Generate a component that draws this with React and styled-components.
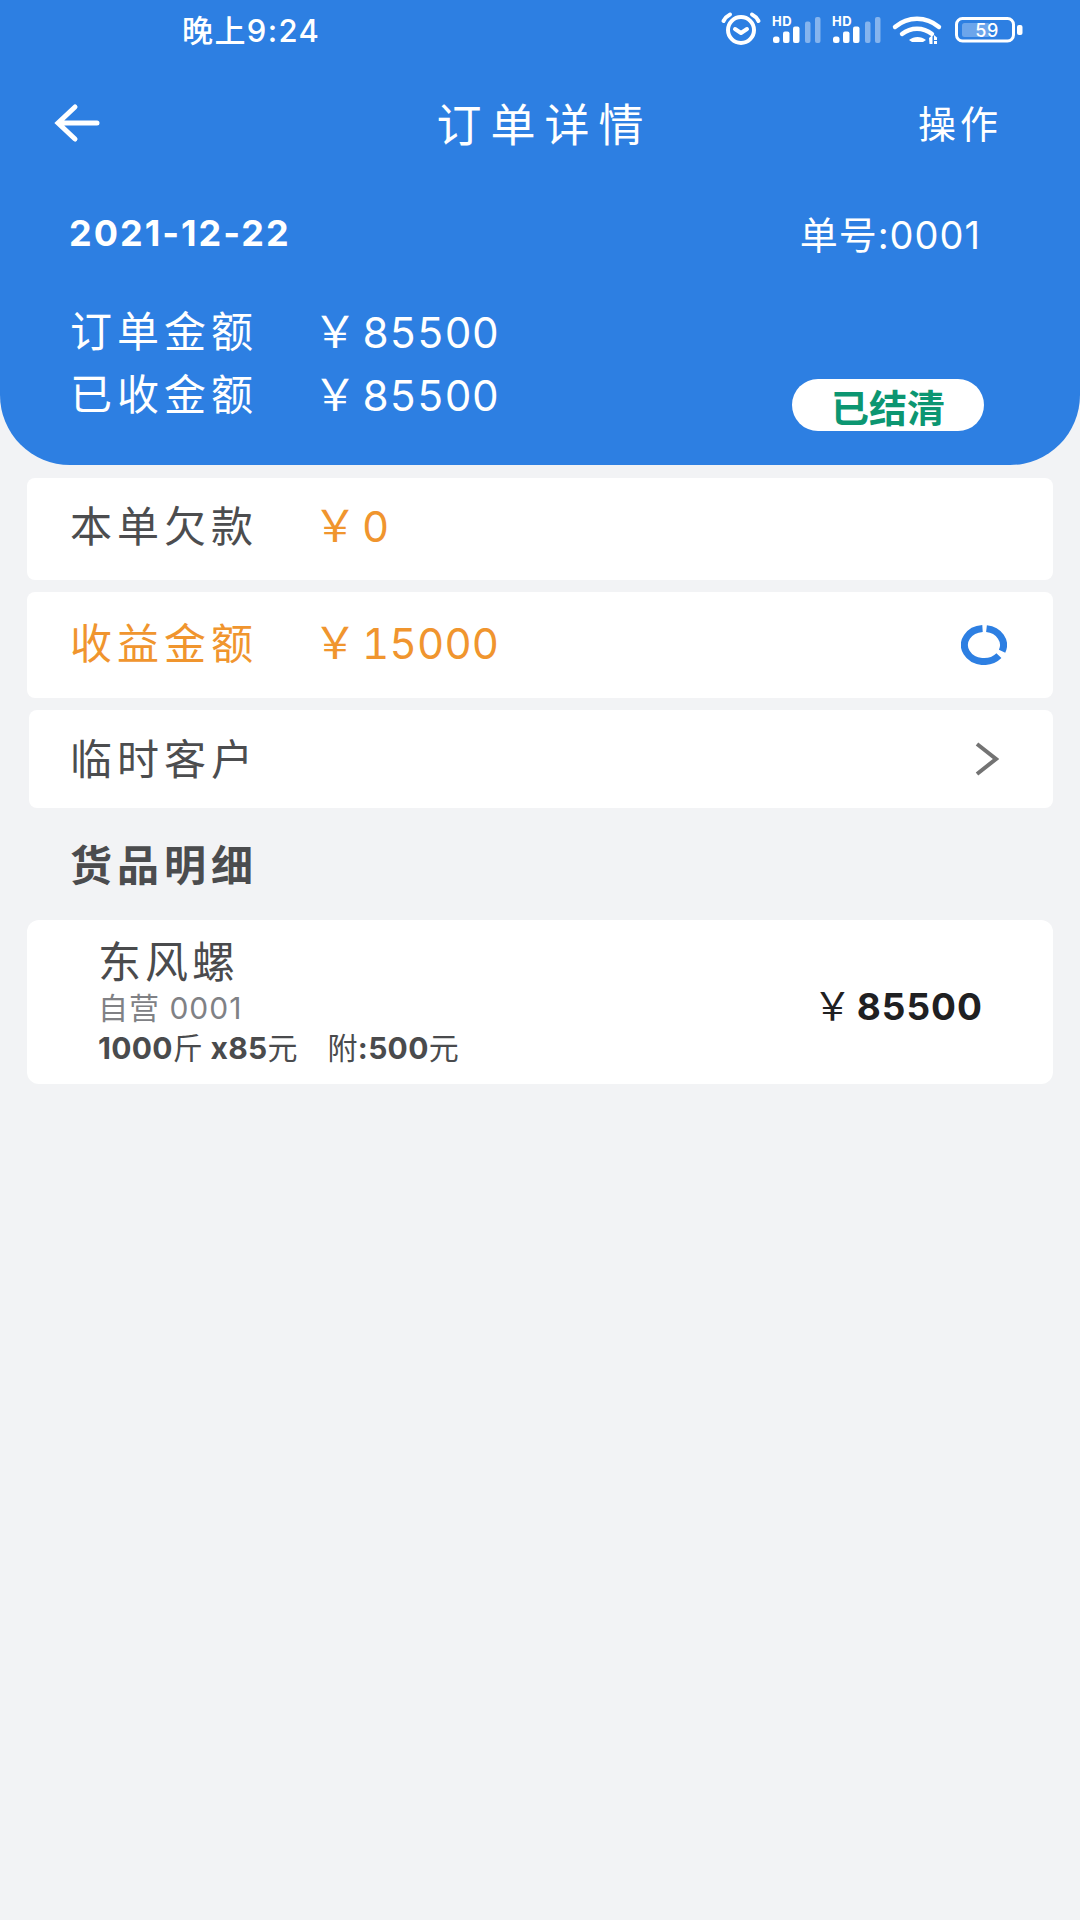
import React from 'react';
import styled, { createGlobalStyle } from 'styled-components';

const Global = createGlobalStyle`
  html, body { margin: 0; padding: 0; background: #f2f3f5; }
  * { box-sizing: border-box; }
  body { font-family: Inter, "Noto Sans CJK SC", sans-serif; }
`;

const Page = styled.div`
  width: 1080px;
  height: 1920px;
  background: #f2f3f5;
  overflow: hidden;
`;

const Header = styled.header`
  height: 465px;
  background: #2d7fe2;
  border-radius: 0 0 70px 70px;
  color: #fff;
  display: flex;
  flex-direction: column;
`;

const StatusBar = styled.div`
  height: 58px;
  display: flex;
  align-items: center;
  justify-content: space-between;
  padding: 0 56px 0 182px;
`;

const Clock = styled.span`
  font-size: 31px;
  font-weight: 500;
  letter-spacing: 1.4px;
  margin-top: -2px;
`;

const StatusIcons = styled.div`
  display: flex;
  align-items: center;
`;

const NavBar = styled.nav`
  height: 90px;
  margin-top: 19px;
  padding: 0 78px;
  display: grid;
  grid-template-columns: 1fr auto 1fr;
  align-items: center;
`;

const BackWrap = styled.span`
  margin-left: -24px;
  margin-top: 2px;
  display: flex;
`;

const Title = styled.h1`
  margin: 0 -9px 0 0;
  font-size: 45px;
  font-weight: 400;
  letter-spacing: 9px;
`;

const NavAction = styled.span`
  justify-self: end;
  font-size: 38px;
  letter-spacing: 4px;
  margin-top: -2px;
`;

const MetaRow = styled.div`
  margin-top: 38px;
  padding: 0 99px 0 69px;
  display: flex;
  align-items: center;
  justify-content: space-between;
`;

const DateText = styled.span`
  font-size: 36px;
  font-weight: 700;
  letter-spacing: 2px;
`;

const OrderNo = styled.span`
  font-size: 38px;
  letter-spacing: 1px;
`;

const Totals = styled.div`
  margin-top: 37px;
  padding: 0 96px 0 70px;
  display: flex;
  align-items: flex-end;
  justify-content: space-between;
`;

const TotalLines = styled.div`
  display: flex;
  flex-direction: column;
`;

const AmountLine = styled.div`
  height: 63px;
  display: flex;
  align-items: center;
  font-size: 42px;
`;

const Label = styled.span`
  width: 243px;
  flex: none;
  letter-spacing: 5px;
`;

const Money = styled.span`
  font-size: 42px;
  letter-spacing: 0.2px;
  font-variant-numeric: tabular-nums;
  color: ${p => p.$color || 'inherit'};
`;

const Yen = styled.span`
  font-size: 1.05em;
  letter-spacing: 0;
  font-weight: 400;
  margin-right: 5px;
`;

const Badge = styled.span`
  width: 192px;
  height: 52px;
  margin-bottom: -8px;
  border-radius: 26px;
  background: #fff;
  color: #0c9671;
  font-size: 38px;
  font-weight: 700;
  display: flex;
  align-items: center;
  justify-content: center;
`;

const Body = styled.main`
  padding: 13px 27px 0;
  display: flex;
  flex-direction: column;
`;

const Card = styled.section`
  height: ${p => p.$h}px;
  margin-top: ${p => p.$mt || 0}px;
  margin-left: ${p => p.$ml || 0}px;
  padding: 0 ${p => p.$pr || 46}px ${p => p.$pb || 0}px ${p => 43 - (p.$ml || 0)}px;
  background: #fff;
  border-radius: 8px;
  display: flex;
  align-items: center;
  justify-content: space-between;
`;

const RowText = styled.div`
  display: flex;
  align-items: center;
  font-size: 42px;
  color: ${p => p.$color};
`;

const CustomerName = styled.span`
  font-size: 42px;
  letter-spacing: 5px;
  color: #4c4d4f;
`;

const IconSlot = styled.span`
  display: flex;
  margin-top: ${p => p.$mt}px;
`;

const SectionTitle = styled.h2`
  margin: 38px 0 0 43px;
  height: 40px;
  line-height: 40px;
  font-size: 42px;
  font-weight: 700;
  letter-spacing: 5px;
  color: #4b4c4e;
`;

const ProductCard = styled.section`
  margin-top: 34px;
  height: 164px;
  padding: 16px 70px 0 71px;
  background: #fff;
  border-radius: 12px;
  display: flex;
  justify-content: space-between;
`;

const ProductInfo = styled.div`
  display: flex;
  flex-direction: column;
`;

const ProductName = styled.div`
  height: 52px;
  line-height: 52px;
  font-size: 43px;
  letter-spacing: 4px;
  color: #4a4b4d;
`;

const ProductCode = styled.div`
  height: 40px;
  line-height: 40px;
  font-size: 30px;
  letter-spacing: 1px;
  color: #808185;
`;

const ProductQty = styled.div`
  height: 40px;
  line-height: 40px;
  font-size: 30px;
  font-weight: 700;
  letter-spacing: 0.3px;
  color: #4a4b4d;
  white-space: pre;
`;

const Thin = styled.span`
  font-weight: 400;
`;

const ProductPrice = styled.div`
  margin-top: 39px;
  font-size: 37px;
  font-weight: 700;
  letter-spacing: 1px;
  color: #1f2022;
`;

const Bars = ({ x }) => (
  <g transform={`translate(${x} 0)`}>
    <rect x="0" y="36.5" width="6.5" height="6.5" rx="2.5" fill="#fff" />
    <rect x="10" y="31.6" width="6.5" height="11.4" rx="2" fill="#fff" />
    <rect x="20" y="26.6" width="6.5" height="16.4" rx="2" fill="#fff" />
    <rect x="32" y="21.6" width="5.5" height="21.4" rx="2" fill="#fff" fillOpacity="0.42" />
    <rect x="42" y="17" width="5.5" height="26" rx="2" fill="#fff" fillOpacity="0.42" />
    <text x="-1" y="26" fontSize="13" fontWeight="700" letterSpacing="0.5" fill="#fff" fontFamily="Inter, sans-serif">HD</text>
  </g>
);

const StatusSvg = () => (
  <svg width="304" height="58" viewBox="720 0 304 58">
    <g fill="none" stroke="#fff" strokeWidth="4" strokeLinecap="round" strokeLinejoin="round">
      <circle cx="741" cy="30" r="13" />
      <path d="M735 29l6 4 6-4" />
      <path d="M723.500 21c1.500-3 3.500-5 6.500-6.500M758.500 21c-1.500-3-3.500-5-6.500-6.500" />
    </g>
    <Bars x={773} />
    <Bars x={833} />
    <g fill="none" stroke="#fff" strokeWidth="4.400" strokeLinecap="round">
      <path d="M895 27c13-11 31-11 44 0" />
      <path d="M902 34c9-7 21-7 30 0" />
    </g>
    <path d="M909 40c5-4 12-4 17 0l-3 2h-11z" fill="#fff" />
    <path d="M929 38l3.500-3v9h-3zM934 35l3.500 3h-.500v2h-3zM934 41h3v3h-3z" fill="#fff" />
    <rect x="956.500" y="18.500" width="57" height="22.500" rx="6" fill="none" stroke="#fff" strokeWidth="3" />
    <rect x="962" y="23" width="28" height="14" rx="2.500" fill="#fff" fillOpacity="0.3" />
    <text x="987" y="36.500" textAnchor="middle" fontSize="18" fontWeight="500" letterSpacing="0.5" fill="#fff" fontFamily="Inter, sans-serif">59</text>
    <rect x="1017" y="25" width="5.500" height="10" rx="2" fill="#fff" />
  </svg>
);

const BackArrow = () => (
  <svg width="46" height="40" viewBox="0 0 46 40" fill="none" stroke="#fff" strokeWidth="5" strokeLinecap="round">
    <path d="M43 20H5M21 4L4 20l17 16" />
  </svg>
);

const RingIcon = () => (
  <svg width="46" height="40" viewBox="0 0 46 40" fill="none" stroke="#2d7fe2" strokeWidth="7">
    <path d="M21.500 3.550A19.500 16.500 0 1 0 37.900 30.600" />
    <path d="M25.500 3.630A19.500 16.500 0 0 1 41.080 26.180" />
  </svg>
);

const Chevron = () => (
  <svg width="24" height="34" viewBox="0 0 24 34" fill="none" stroke="#737373" strokeWidth="4">
    <path d="M2 2l19 15L2 32" />
  </svg>
);

const Amount = ({ value, color }) => (
  <Money $color={color}><Yen>￥</Yen>{value}</Money>
);

export default function App() {
  return (
    <Page>
      <Global />
      <Header>
        <StatusBar>
          <Clock>晚上9:24</Clock>
          <StatusIcons><StatusSvg /></StatusIcons>
        </StatusBar>
        <NavBar>
          <BackWrap><BackArrow /></BackWrap>
          <Title>订单详情</Title>
          <NavAction>操作</NavAction>
        </NavBar>
        <MetaRow>
          <DateText>2021-12-22</DateText>
          <OrderNo>单号:0001</OrderNo>
        </MetaRow>
        <Totals>
          <TotalLines>
            <AmountLine><Label>订单金额</Label><Amount value="85500" /></AmountLine>
            <AmountLine><Label>已收金额</Label><Amount value="85500" /></AmountLine>
          </TotalLines>
          <Badge>已结清</Badge>
        </Totals>
      </Header>
      <Body>
        <Card $h={102} $pb={12}>
          <RowText $color="#4c4d4f"><Label>本单欠款</Label><Amount value="0" color="#f0952e" /></RowText>
        </Card>
        <Card $h={106} $mt={12} $pb={10}>
          <RowText $color="#f0952e"><Label>收益金额</Label><Amount value="15000" /></RowText>
          <IconSlot $mt={10}><RingIcon /></IconSlot>
        </Card>
        <Card $h={98} $mt={12} $ml={2} $pr={54} $pb={6}>
          <CustomerName>临时客户</CustomerName>
          <IconSlot $mt={6}><Chevron /></IconSlot>
        </Card>
        <SectionTitle>货品明细</SectionTitle>
        <ProductCard>
          <ProductInfo>
            <ProductName>东风螺</ProductName>
            <ProductCode>自营 0001</ProductCode>
            <ProductQty>1000<Thin>斤</Thin> x85<Thin>元</Thin>    <Thin>附</Thin>:500<Thin>元</Thin></ProductQty>
          </ProductInfo>
          <ProductPrice><Yen>￥</Yen>85500</ProductPrice>
        </ProductCard>
      </Body>
    </Page>
  );
}
